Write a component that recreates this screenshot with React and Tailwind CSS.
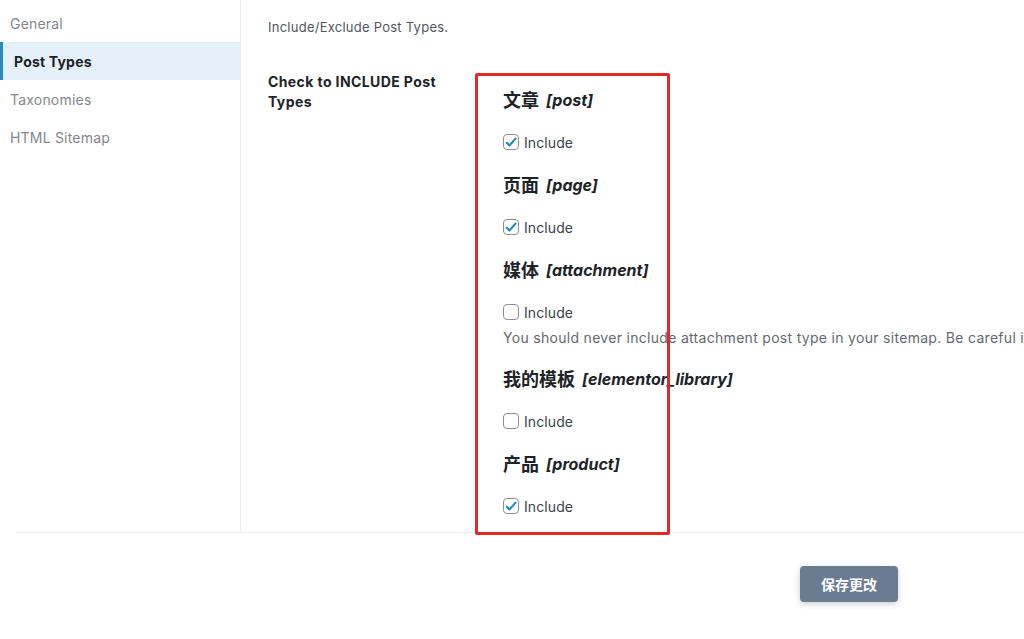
import React from "react";

const font = { fontFamily: 'Inter, "Noto Sans CJK SC", sans-serif' };

const navItems = [
  { label: "General" },
  { label: "Post Types", active: true },
  { label: "Taxonomies" },
  { label: "HTML Sitemap" },
];

const postTypes = [
  { name: "文章", slug: "post", checked: true },
  { name: "页面", slug: "page", checked: true },
  {
    name: "媒体",
    slug: "attachment",
    checked: false,
    note: "You should never include attachment post type in your sitemap. Be careful if you checked this",
  },
  { name: "我的模板", slug: "elementor_library", checked: false },
  { name: "产品", slug: "product", checked: true },
];

function Checkbox({ checked }) {
  return (
    <span className="w-[16px] h-[16px] shrink-0 rounded-[4px] border border-[#8c8f94] bg-white flex items-center justify-center">
      {checked && (
        <svg width="15" height="15" viewBox="0 0 20 20">
          <path d="M4 10.5l3.8 3.8L16.5 4.5" fill="none" stroke="#1e8cbe" strokeWidth="3" strokeLinecap="round" strokeLinejoin="round" />
        </svg>
      )}
    </span>
  );
}

function PostTypeBlock({ item, first }) {
  return (
    <div className={first ? "" : "mt-[19px]"}>
      <div className="h-[24px] flex items-center text-[18px] font-bold text-[#1d2327] whitespace-nowrap">
        <span>{item.name}</span>
        <span className="ml-[7px] italic text-[16px]">[{item.slug}]</span>
      </div>
      <label className="mt-[18px] h-[24px] flex items-center gap-[5px] text-[14px] tracking-[0.1px] text-[#3c434a]">
        <Checkbox checked={item.checked} />
        <span>Include</span>
      </label>
      {item.note && (
        <p className="mt-[4px] mb-[2px] h-[20px] leading-[20px] text-[14px] tracking-[0.3px] text-[#646970] whitespace-nowrap">
          {item.note}
        </p>
      )}
    </div>
  );
}

export default function App() {
  return (
    <div className="relative w-full h-[639px] bg-white overflow-hidden" style={font}>
      <div className="flex h-[532px]">
        <nav className="w-[241px] shrink-0 border-r border-[#ececec] pt-[4px]">
          {navItems.map((n) =>
            n.active ? (
              <div
                key={n.label}
                className="h-[38px] flex items-center border-l-[3px] border-[#2a8bc0] bg-[#e5f1f8] pl-[11px] text-[14px] tracking-[0.2px] font-bold text-[#1d2327]"
              >
                {n.label}
              </div>
            ) : (
              <div key={n.label} className="h-[38px] flex items-center pl-[10px] text-[14px] tracking-[0.2px] text-[#82878c]">
                {n.label}
              </div>
            )
          )}
        </nav>

        <main className="flex-1 min-w-0 pl-[27px] pt-[17px]">
          <p className="h-[20px] leading-[20px] text-[13px] tracking-[0.25px] text-[#50575e]">Include/Exclude Post Types.</p>

          <div className="mt-[35px] flex">
            <div className="w-[235px] shrink-0 text-[14px] leading-[20px] tracking-[0.4px] font-bold text-[#1d2327]">
              Check to INCLUDE Post
              <br />
              Types
            </div>
            <div className="pt-[16px] min-w-0">
              {postTypes.map((p, i) => (
                <PostTypeBlock key={p.slug} item={p} first={i === 0} />
              ))}
            </div>
          </div>
        </main>
      </div>

      <div className="ml-[16px] border-t border-[#f0f0f0]" />

      <div className="flex justify-end pr-[126px] pt-[33px]">
        <button
          type="button"
          className="w-[98px] h-[36px] rounded-[4px] bg-[#6b7b92] text-white text-[14px] font-bold shadow-[0_2px_6px_rgba(0,0,0,0.2)]"
        >
          保存更改
        </button>
      </div>

      {/* red annotation frame */}
      <div className="absolute left-[475px] top-[73px] w-[195px] h-[462px] border-[3px] border-[#e02a2a] rounded-[2px] pointer-events-none" />
    </div>
  );
}
